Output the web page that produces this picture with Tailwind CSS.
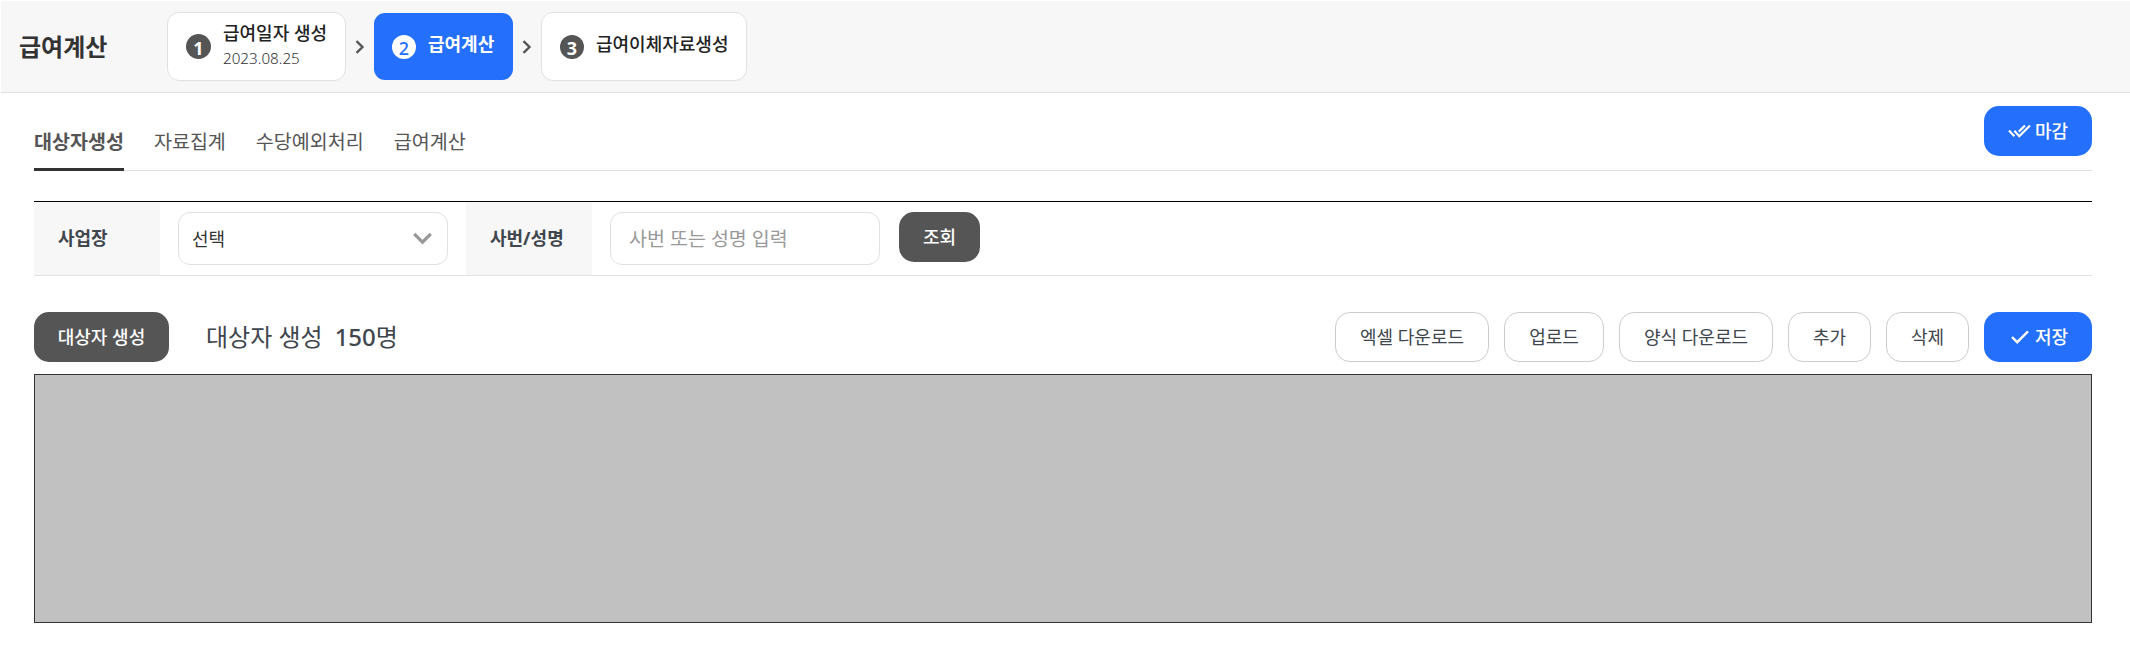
<!DOCTYPE html>
<html lang="ko">
<head>
<meta charset="utf-8">
<title>급여계산</title>
<script src="https://cdn.jsdelivr.net/npm/@tailwindcss/browser@4"></script>
</head>
<body class="bg-white font-['Noto_Sans','Noto_Sans_CJK_KR',sans-serif] text-[18px] leading-[26px] text-[#40464d] whitespace-nowrap">
<header class="mt-px ml-px flex h-[92px] items-center border-b border-[#e1e1e1] bg-[#f7f7f7] pl-[18px]">
  <h1 class="w-[148px] text-[24px] leading-[36px] font-bold text-[#333]">급여계산</h1>
  <div class="flex h-[69px] w-[179px] items-center rounded-[12px] border border-[#e1e1e1] bg-white pl-[18px]">
    <span class="mr-3 flex size-[25px] items-center justify-center rounded-full bg-[#555] pt-[2px] text-[18px] font-bold text-white">1</span>
    <div class="-mt-px">
      <div class="leading-[25px] font-medium text-[#222]">급여일자 생성</div>
      <div class="text-[15.2px] leading-[25px] font-light text-[#333]">2023.08.25</div>
    </div>
  </div>
  <svg class="mx-[9px] h-[14px] w-[10px]" viewBox="0 0 10 14" fill="none" stroke="#555" stroke-width="2.3"><path d="M1.5 1.2 7.5 7 1.5 12.8"/></svg>
  <div class="flex h-[67px] w-[139px] items-center rounded-[11px] bg-[#246ffb] pl-[18px]">
    <span class="mr-3 flex size-6 items-center justify-center rounded-full bg-white pt-[2px] text-[18px] font-medium text-[#246ffb]">2</span>
    <span class="-mt-[6px] font-bold text-white">급여계산</span>
  </div>
  <svg class="mx-[9px] h-[14px] w-[10px]" viewBox="0 0 10 14" fill="none" stroke="#555" stroke-width="2.3"><path d="M1.5 1.2 7.5 7 1.5 12.8"/></svg>
  <div class="flex h-[69px] w-[206px] items-center rounded-[12px] border border-[#e1e1e1] bg-white pl-[18px]">
    <span class="mr-3 flex size-6 items-center justify-center rounded-full bg-[#555] pt-[2px] text-[18px] font-bold text-white">3</span>
    <span class="-mt-[6px] font-medium text-[#222]">급여이체자료생성</span>
  </div>
</header>
<main class="ml-[34px] w-[2058px]">
  <nav class="flex h-[78px] items-end justify-between border-b border-[#e1e1e1]">
    <div class="-mb-px flex gap-[30px] text-[19.56px] text-[#555]">
      <a class="h-[44px] border-b-[3px] border-[#333] pt-[2px] font-bold">대상자생성</a>
      <a class="pt-[2px]">자료집계</a>
      <a class="pt-[2px]">수당예외처리</a>
      <a class="pt-[2px]">급여계산</a>
    </div>
    <button class="mb-[14px] flex h-[50px] w-[108px] items-center rounded-[15px] bg-[#246ffb] pl-6 font-medium text-white">
      <svg class="mr-[4px] h-[14px] w-[23px]" viewBox="0 0 23 14" fill="none" stroke="#fff" stroke-width="2.2"><path d="M1 6.5 6.4 12.2M6.4 6.7 11.3 12.2 22 1.5M10.8 7.6 17 1.5"/></svg>마감
    </button>
  </nav>
  <section class="mt-[30px] flex h-[75px] border-t border-b border-t-black border-b-[#e1e1e1]">
    <label class="flex w-[126px] items-center bg-[#f7f7f7] pb-[2px] pl-6 font-bold">사업장</label>
    <div class="mt-[10px] ml-[18px] flex h-[53px] w-[270px] items-center justify-between rounded-[12px] border border-[#e1e1e1] pr-[15px] pl-[13px] text-[#333]">선택
      <svg class="h-[13px] w-[19px]" viewBox="0 0 19 13" fill="none" stroke="#999" stroke-width="3.3"><path d="M1.2 1.8 9.5 10.2 17.8 1.8"/></svg>
    </div>
    <label class="ml-[18px] flex w-[126px] items-center bg-[#f7f7f7] pb-[2px] pl-6 font-bold">사번/성명</label>
    <div class="mt-[10px] ml-[18px] flex h-[53px] w-[270px] items-center rounded-[12px] border border-[#e1e1e1] pl-[18px] text-[19.5px] text-[#999]">사번 또는 성명 입력</div>
    <button class="mt-[10px] ml-[19px] h-[50px] w-[81px] rounded-[15px] bg-[#555] font-medium text-white">조회</button>
  </section>
  <section class="mt-[36px] flex h-[50px] items-center gap-[15px]">
    <button class="h-[50px] w-[135px] rounded-[15px] bg-[#555] font-medium text-white">대상자 생성</button>
    <div class="ml-[22px] flex-1 text-[24px] leading-[36px]">대상자 생성<span class="ml-[12px] font-medium">150</span>명</div>
    <button class="h-[50px] w-[154px] rounded-[15px] border border-[#ccc]">엑셀 다운로드</button>
    <button class="h-[50px] w-[100px] rounded-[15px] border border-[#ccc]">업로드</button>
    <button class="h-[50px] w-[154px] rounded-[15px] border border-[#ccc]">양식 다운로드</button>
    <button class="h-[50px] w-[83px] rounded-[15px] border border-[#ccc]">추가</button>
    <button class="h-[50px] w-[83px] rounded-[15px] border border-[#ccc]">삭제</button>
    <button class="flex h-[50px] w-[108px] items-center rounded-[15px] bg-[#246ffb] pl-[27px] font-medium text-white">
      <svg class="mr-[6px] h-[14px] w-[18px]" viewBox="0 0 18 14" fill="none" stroke="#fff" stroke-width="2.4"><path d="M1 7 6.2 12.2 17 1.4"/></svg>저장
    </button>
  </section>
  <div class="mt-[12px] h-[249px] border border-[#333] bg-[#c1c1c1]"></div>
</main>
</body>
</html>
